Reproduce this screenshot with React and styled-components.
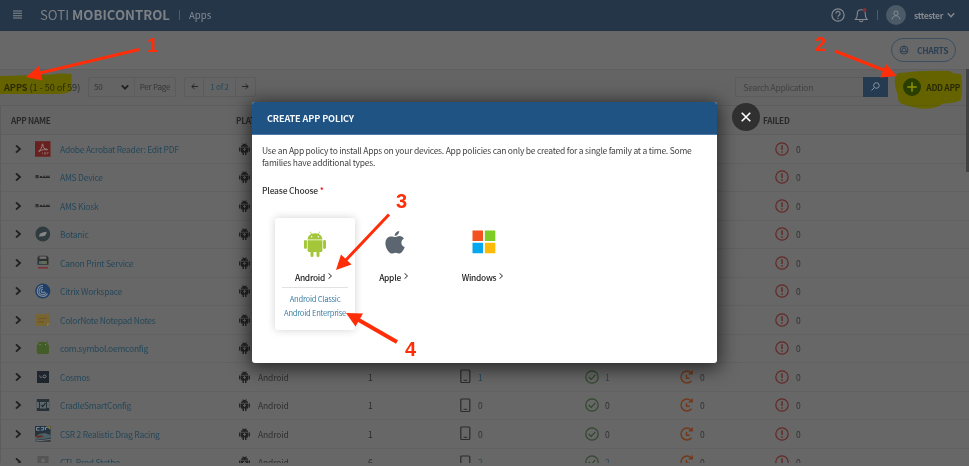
import React from "react";
import styled, { createGlobalStyle, css } from "styled-components";

const Global = createGlobalStyle`
  * { box-sizing: border-box; }
  html, body { margin: 0; height: 100%; overflow: hidden; }
  body { background: #676767; font-family: "Noto Sans CJK SC", "Noto Sans", sans-serif; font-size: 9px; line-height: 12px; color: #2b2b2b; }
  svg { display: block; flex: none; }
`;

const Page = styled.div`
  position: relative;
  width: 969px;
  height: 466px;
  overflow: hidden;
  display: flex;
  flex-direction: column;
  background: #676767;
`;

const TopBar = styled.header`
  height: 31px;
  flex: none;
  display: flex;
  align-items: center;
  padding: 0 14px 2px 13px;
  background: #253649;
  color: #858a90;
`;
const Brand = styled.div`
  margin-left: 18px;
  font-size: 13.2px;
  line-height: 29px;
  color: #7d8185;
  b { font-weight: 700; }
`;
const Divider = styled.i`
  width: 1px;
  height: 10px;
  background: #4d5b6a;
  margin: 0 ${(p) => p.$right}px 0 ${(p) => p.$left}px;
`;
const Crumb = styled.span`font-size: 9.6px;`;
const UserTools = styled.div`
  display: flex;
  align-items: center;
  margin-left: auto;
`;
const Avatar = styled.span`
  width: 20px;
  height: 20px;
  border-radius: 50%;
  background: #4b5a66;
  display: grid;
  place-items: center;
  margin-right: 8px;
`;
const UserName = styled.b`
  font-size: 8.5px;
  font-weight: 700;
  letter-spacing: -0.35px;
  margin-right: 4px;
`;

const SubBar = styled.div`
  height: 39px;
  flex: none;
  display: flex;
  justify-content: flex-end;
  align-items: center;
  padding-right: 13px;
  background: #686868;
  border-bottom: 1px solid #5f5f5f;
`;
const ChartsButton = styled.button`
  width: 65px;
  height: 24px;
  padding: 0 0 0 7px;
  border: 1px solid #3b4e60;
  border-radius: 12px;
  background: transparent;
  display: flex;
  align-items: center;
  gap: 8px;
  font: 700 8.5px/12px "Noto Sans CJK SC", sans-serif;
  letter-spacing: -0.4px;
  color: #2c4053;
`;

const Toolbar = styled.div`
  height: 36px;
  flex: none;
  display: flex;
  align-items: center;
  padding: 0 9px 2px 4px;
  background: #646464;
  border-bottom: 1px solid #5d5d5d;
`;
const Count = styled.div`
  width: 84px;
  font-size: 9.2px;
  letter-spacing: -0.07px;
  white-space: nowrap;
  b { font-weight: 700; }
`;
const ControlGroup = styled.div`
  display: flex;
  height: 20px;
  border: 1px solid #5c5c5c;
  border-radius: 2px;
  margin-right: 8px;
  font-size: 8.1px;
  letter-spacing: -0.25px;
`;
const Cell = styled.div`
  width: ${(p) => p.$w}px;
  display: flex;
  align-items: center;
  justify-content: ${(p) => p.$justify || "center"};
  padding: 0 ${(p) => p.$pad || 0}px;
  color: ${(p) => p.$color || "#353535"};
  white-space: nowrap;
  & + & { border-left: 1px solid #5c5c5c; }
`;
const Search = styled.div`
  display: flex;
  margin-left: auto;
  width: 153px;
  height: 20px;
  border: 1px solid #5c5c5c;
  font-size: 8.5px;
  letter-spacing: -0.25px;
  color: #424242;
  line-height: 18px;
  padding-left: 7px;
`;
const SearchButton = styled.span`
  width: 25px;
  height: 20px;
  margin: -1px -1px 0 auto;
  background: #243b51;
  display: grid;
  place-items: center;
`;
const AddApp = styled.div`
  display: flex;
  align-items: center;
  gap: 5px;
  margin-left: 15px;
  font-size: 8.4px;
  font-weight: 700;
  letter-spacing: -0.3px;
  color: #2a2a10;
  white-space: nowrap;
`;

const tableGrid = css`
  display: grid;
  grid-template-columns: 234px 133px 92px 125px 95px 95px 1fr;
  align-items: center;
`;
const TableHead = styled.div`
  ${tableGrid}
  height: 29px;
  flex: none;
  padding-bottom: 1px;
  background: #656565;
  border-bottom: 1px solid #5e5e5e;
  border-left: 1px solid #5c5c5c;
  font-size: 8.2px;
  font-weight: 700;
  letter-spacing: -0.25px;
  color: #292929;
  span:first-child { padding-left: 10px; }
  span:nth-child(2) { padding-left: 1px; }
  span:last-child { margin-left: -12px; }
`;
const Row = styled.div`
  ${tableGrid}
  height: 28.5px;
  flex: none;
  border-bottom: 1px solid #616161;
  border-left: 1px solid #5c5c5c;
  font-size: 8.5px;
`;
const NameCell = styled.div`
  display: flex;
  align-items: center;
  padding-left: 13px;
  > svg + svg { margin-left: 13px; }
`;
const AppLink = styled.a`
  color: #25485a;
  margin-left: 9px;
  letter-spacing: -0.25px;
  white-space: nowrap;
`;
const IconValue = styled.div`
  display: flex;
  align-items: center;
  gap: ${(p) => p.$gap || 6}px;
  color: ${(p) => (p.$link ? "#25485a" : "#303030")};
  padding-left: ${(p) => p.$pad || 0}px;
`;
const Platform = styled.span`letter-spacing: -0.15px;`;

const Modal = styled.section`
  position: absolute;
  left: 252px;
  top: 102px;
  width: 465px;
  height: 261px;
  border-radius: 3px;
  background: #fff;
  overflow: hidden;
  box-shadow: 0 3px 18px 3px rgba(0, 0, 0, 0.6);
`;
const ModalTitle = styled.h1`
  margin: 0;
  height: 33px;
  padding-left: 15px;
  background: #1e5384;
  border-bottom: 1px solid #4b79a6;
  color: #f4f7fa;
  font-size: 9.1px;
  line-height: 33px;
  font-weight: 700;
  letter-spacing: -0.1px;
`;
const ModalBody = styled.div`padding: 10px 10px 0;`;
const Intro = styled.p`
  margin: 0;
  font-size: 8.5px;
  line-height: 11.7px;
  letter-spacing: -0.235px;
  color: #444;
  white-space: nowrap;
`;
const Prompt = styled.div`
  margin-top: 16px;
  font-size: 8.5px;
  font-weight: 500;
  letter-spacing: -0.2px;
  color: #333;
  em { color: #e12; font-style: normal; }
`;
const Choices = styled.div`
  display: flex;
  margin: 22px 0 0 13px;
`;
const Choice = styled.div`
  width: 80px;
  height: 112px;
  padding-top: ${(p) => (p.$selected ? 13 : 12)}px;
  margin-right: ${(p) => p.$gap || 0}px;
  border-radius: 3px;
  display: flex;
  flex-direction: column;
  align-items: center;
  ${(p) => p.$selected && css`box-shadow: 0 0 8px rgba(0, 0, 0, 0.18);`}
`;
const ChoiceLabel = styled.div`
  display: flex;
  align-items: center;
  gap: 2px;
  margin-top: ${(p) => (p.$raised ? 14 : 15)}px;
  height: 12px;
  font-size: 8.4px;
  font-weight: 500;
  letter-spacing: -0.25px;
  color: #222;
  svg { margin: 0 2px 2px 0; }
`;
const SubLinks = styled.div`
  width: 66px;
  border-top: 1px solid #e2e2e2;
  margin-top: 4px;
  padding-top: 4px;
  display: flex;
  flex-direction: column;
  align-items: center;
  font-size: 7.6px;
  line-height: 14px;
  letter-spacing: -0.25px;
  color: #3c7fa5;
  white-space: nowrap;
`;
const CloseButton = styled.button`
  position: absolute;
  left: 732px;
  top: 103px;
  width: 28px;
  height: 28px;
  padding: 0;
  border: 0;
  border-radius: 50%;
  background: #303030;
  display: grid;
  place-items: center;
`;
const ScrollThumb = styled.i`
  position: absolute;
  right: 0;
  top: 69px;
  width: 3px;
  height: 103px;
  background: #424242;
`;
const BottomEdge = styled.i`
  position: absolute;
  left: 0;
  right: 0;
  bottom: 0;
  height: 3px;
  background: #676767;
`;
const Annotations = styled.svg`
  position: absolute;
  inset: 0;
  pointer-events: none;
  ${(p) => p.$multiply && css`mix-blend-mode: multiply;`}
`;
const Mark = styled.span`
  position: absolute;
  left: ${(p) => p.$x}px;
  top: ${(p) => p.$y}px;
  font: 700 20px/20px "Liberation Sans", Arial, sans-serif;
  color: #ff2d08;
`;

const Chevron = ({ dir = "right", size = 8, color = "#202020", w = 1.5 }) => (
  <svg width={size} height={size} viewBox="0 0 8 8" fill="none" stroke={color} strokeWidth={w}>
    <path d={dir === "right" ? "M2 .4 6 4 2 7.6" : "M.8 2.3 4 5.7 7.2 2.3"} />
  </svg>
);
const Arrow = ({ flip }) => (
  <svg width="7" height="7" viewBox="0 0 7 7" fill="none" stroke="#262626" strokeWidth="1">
    <path d={flip ? "M7 3.5H.8M3.5 1 .8 3.5 3.5 6" : "M0 3.5h6.2M3.5 1l2.7 2.5L3.5 6"} />
  </svg>
);
const Robot = ({ width, height, color, eyes = "#fff" }) => (
  <svg width={width} height={height} viewBox="0 0 22 26" fill={color}>
    <path d="M3.6 8.5C3.7 5.9 5 4 7.2 3L5.9.8l.5-.3 1.4 2.3a9 9 0 0 1 6.4 0L15.6.5l.5.3L14.8 3c2.2 1 3.5 2.900 3.6 5.500z" />
    <path d="M3.600 9.300h14.800v10.200a1.500 1.500 0 0 1-1.500 1.500h-1.400v3.400a1.500 1.500 0 0 1-3 0V21h-3v3.400a1.500 1.500 0 0 1-3 0V21H5.100a1.500 1.500 0 0 1-1.500-1.500z" />
    <rect x="0" y="9" width="2.900" height="9" rx="1.450" />
    <rect x="19.100" y="9" width="2.900" height="9" rx="1.450" />
    <circle cx="7.600" cy="5.700" r=".8" fill={eyes} />
    <circle cx="14.400" cy="5.700" r=".8" fill={eyes} />
  </svg>
);
const PlatformIcon = () => (
  <svg width="11" height="12" viewBox="0 0 11 12" fill="#232323">
    <path d="M2 4.500C2 2.600 3 1.600 4 1.200L3.300.3h.8l.6.7h1.600l.6-.7h.8L7 1.200c1 .4 2 1.400 2 3.300zM2 5h7v4.500H7.500V12H6V9.500H5V12H3.500V9.500H2zM0 4.500h1.500v4H0zM9.500 4.500H11v4H9.500z" />
    <path d="M5 5h1v1h1v1H6v1H5V7H4V6h1zM3.500 2.700h1v.8h-1zM6.500 2.700h1v.8h-1z" fill="#5c5c5c" />
  </svg>
);
const DeviceIcon = () => (
  <svg width="11" height="15" viewBox="0 0 11 15" fill="none" stroke="#2c2c2c">
    <rect x=".8" y="1" width="9" height="12.500" rx="1" strokeWidth="1.200" />
    <path d="M3.600 11.300h3.600" />
  </svg>
);
const CheckIcon = () => (
  <svg width="14" height="14" viewBox="0 0 14 14" fill="none" stroke="#30482b" strokeWidth="1.200">
    <circle cx="7" cy="7" r="6.200" />
    <path d="m3.700 7 2.400 2.300 4.300-4.500" />
  </svg>
);
const PendingIcon = () => (
  <svg width="14" height="14" viewBox="0 0 14 14" fill="none" stroke="#70391c" strokeWidth="1.400">
    <path d="M11.600 10.800A6 6 0 1 1 11.500 3M12.200.5v3.200H8.800M6.500 5v3.200h3.200" />
  </svg>
);
const FailIcon = () => (
  <svg width="14" height="14" viewBox="0 0 14 14" fill="none" stroke="#642824" strokeWidth="1.200">
    <circle cx="7" cy="7" r="6.200" />
    <path d="M7 3.200v4.900M7 9.300v1.500" strokeWidth="1.400" />
  </svg>
);

const drawings = {
  adobe: (
    <g>
      <rect width="15.500" height="15.500" y=".2" fill="#69201e" />
      <path d="M3.500 10.200C5.700 9.100 7.300 5.800 7.100 3.700c0-1 1.200-1 .9.200C7.400 6.300 9.500 8.200 12 8.200c.8 0 .5 1-.3.700-2-.6-4.500-.5-7.900 1.700" fill="none" stroke="#999" strokeWidth=".8" />
      <path d="M7.500 11.300v2M9.500 11.300v2h1.200v-2zM12.300 13.300v-2h1.500M12.300 12.300h1" stroke="#8c7574" strokeWidth=".6" fill="none" />
    </g>
  ),
  zebra: (
    <g>
      <path d="M.5 6h3v3.200h-3z" fill="#292929" />
      <path d="M1.300 7h1M1.300 8.300h1" stroke="#696969" strokeWidth=".5" />
      <path d="M4.500 8.500h10.500M5 7.500h2M8 7.200h2.200M11 7.300h3.700" stroke="#292929" strokeWidth="1.100" />
    </g>
  ),
  botanic: (
    <g>
      <circle cx="7.800" cy="8" r="7.400" fill="#303b3f" />
      <path d="M4.200 10.200c0-3 2.500-3.700 7.500-4.400-.3 3.400-2.400 5.100-4.900 4.500-.9-.2-1.500.2-2.600.4z" fill="#858585" />
    </g>
  ),
  canon: (
    <g>
      <path d="M2.500 2.500 4 .8h8l1.500 1.700v7.300h-11z" fill="#2e3030" />
      <path d="M4.500 1.500h6.800v2.300H4.500z" fill="#727272" />
      <path d="M4 6h7.800v3H4z" fill="#636f55" />
      <path d="M4 6h3v3H4z" fill="#4c6675" />
      <path d="M3 12.800h10" stroke="#7e2626" strokeWidth="1.300" />
    </g>
  ),
  citrix: (
    <g fill="none" stroke="#7b8b9b" strokeWidth="1.100">
      <circle cx="7.800" cy="8" r="7.600" fill="#203f68" stroke="none" />
      <path d="M12.500 10.500a5.400 5.400 0 1 1-4.500-8" />
      <path d="M11 9.500a3.600 3.600 0 1 1-3-5" />
      <path d="M9.500 8.500a1.700 1.700 0 1 1-1.400-2.200" />
    </g>
  ),
  note: (
    <g>
      <path d="M1 2h13.500v9.500l-2.500 2.400H1z" fill="#776631" />
      <path d="M14.500 11.500H12v2.400z" fill="#968142" />
      <path d="M3 7.500c2-2 3-.5 4.500-1s2 .8 4.500-1M3 9.800h6" stroke="#704923" strokeWidth=".8" fill="none" />
    </g>
  ),
  android: (
    <g fill="#435d28">
      <path d="M1.700 6.500A6.200 5.400 0 0 1 14 6.500V12a2 2 0 0 1-2 2H3.700a2 2 0 0 1-2-2z" />
      <path d="m3 1 1.400 2M12.700 1l-1.400 2" stroke="#435d28" strokeWidth=".8" />
      <circle cx="5" cy="4.700" r=".6" fill="#888" />
      <circle cx="10.600" cy="4.700" r=".6" fill="#888" />
    </g>
  ),
  cosmos: (
    <g>
      <rect x="2" y="2" width="12" height="12" fill="#1f252d" />
      <path d="M4.700 6.500c0 2 1.400 2.400 2.800 1.400M8 7.500a1.500 1.500 0 0 1 3 0c0 1.500-2 1.500-3 .8" fill="none" stroke="#777b80" />
    </g>
  ),
  cradle: (
    <g>
      <rect x="1.800" y="2" width="12.400" height="12" fill="#293036" />
      <path d="M2 5h2v6H2zM12 5h2v6h-2zM5 5h6v6.500H5z" fill="#5c6870" />
      <path d="m6.300 8 1.500 1.500L10.500 6" fill="none" stroke="#20262b" strokeWidth="1.200" />
    </g>
  ),
  csr: (
    <g>
      <rect y=".2" width="15.500" height="15.500" fill="#283238" />
      <path d="M0 .2h15.500V5H0z" fill="#1d344b" />
      <path d="M1.500 1.500h3M1.500 1.500v2.700h3M6 1.600h3L8.500 4H5.800M10.500 4V1.500h2" stroke="#82898d" fill="none" />
      <path d="M11 .2h4.500V4z" fill="#847832" />
      <path d="m0 11 4-3 6-1 5.500 2v3l-7 1L0 14z" fill="#4c6067" />
      <path d="m1 10 5-1 3 2-7 1z" fill="#68302a" />
      <path d="M0 15l15.500-1.500" stroke="#717574" />
    </g>
  ),
  generic: (
    <g>
      <rect x="2.500" y="2" width="11" height="13" fill="#555" />
      <circle cx="8" cy="6.500" r="2" fill="#686868" />
      <path d="M4.500 12h7v2h-7z" fill="#686868" />
    </g>
  ),
};
const AppIcon = ({ type }) => (
  <svg width="16" height="16" viewBox="0 0 16 16">{drawings[type]}</svg>
);

const apps = [
  ["Adobe Acrobat Reader: Edit PDF", "adobe", 1, 0, 0],
  ["AMS Device", "zebra", 1, 0, 0],
  ["AMS Kiosk", "zebra", 1, 0, 0],
  ["Botanic", "botanic", 1, 0, 0],
  ["Canon Print Service", "canon", 1, 0, 0],
  ["Citrix Workspace", "citrix", 1, 0, 0],
  ["ColorNote Notepad Notes", "note", 1, 0, 0],
  ["com.symbol.oemconfig", "android", 1, 0, 0],
  ["Cosmos", "cosmos", 1, 1, 1],
  ["CradleSmartConfig", "cradle", 1, 0, 0],
  ["CSR 2 Realistic Drag Racing", "csr", 1, 0, 0],
  ["CTL Prod Stetho", "generic", 6, 2, 2],
];

const AppRow = ({ app: [name, icon, policies, devices, installed] }) => (
  <Row>
    <NameCell>
      <Chevron size={8} w={1.8} />
      <AppIcon type={icon} />
      <AppLink>{name}</AppLink>
    </NameCell>
    <IconValue $gap={8} $pad={4}><PlatformIcon /><Platform>Android</Platform></IconValue>
    <span>{policies}</span>
    <IconValue $gap={7} $link={devices > 0}><DeviceIcon />{devices}</IconValue>
    <IconValue $link={installed > 0}><CheckIcon />{installed}</IconValue>
    <IconValue><PendingIcon />0</IconValue>
    <IconValue $gap={7}><FailIcon />0</IconValue>
  </Row>
);

const Header = () => (
  <TopBar>
    <svg width="9" height="9" viewBox="0 0 9 9" stroke="#858a90" strokeWidth="1.100">
      <path d="M0 1h9M0 3.300h9M0 5.700h9M0 8h9" />
    </svg>
    <Brand>SOTI <b>MOBICONTROL</b></Brand>
    <Divider $left={9} $right={9} />
    <Crumb>Apps</Crumb>
    <UserTools>
      <svg width="14" height="14" viewBox="0 0 14 14" fill="none" stroke="#858a90" strokeWidth="1.200">
        <circle cx="7" cy="7" r="6.100" />
        <path d="M4.900 5.500a2.100 2.100 0 1 1 3.200 1.700c-.8.500-1.100.8-1.100 1.500M7 9.800v1.200" />
      </svg>
      <svg width="32" height="16" viewBox="0 0 32 16" fill="none" stroke="#858a90" strokeWidth="1.100">
        <path d="M10.500 12.500h11.500c-2-2-1.700-3.500-1.700-6 0-5-8-5-8 0 0 2.500.2 4-1.800 6zM14.700 13.200c0 2 3.200 2 3.200 0" />
        <circle cx="19.500" cy="3" r="2" fill="#7e3136" stroke="none" />
      </svg>
      <Divider $left={0} $right={8} />
      <Avatar>
        <svg width="10" height="10" viewBox="0 0 10 10" fill="none" stroke="#7d8c95">
          <circle cx="5" cy="3.200" r="2.200" />
          <path d="M1.200 9.500c0-5 7.600-5 7.600 0" />
        </svg>
      </Avatar>
      <UserName>sttester</UserName>
      <Chevron dir="down" color="#858a90" w={1.4} />
    </UserTools>
  </TopBar>
);

const CreatePolicy = () => (
  <Modal>
    <ModalTitle>CREATE APP POLICY</ModalTitle>
    <ModalBody>
      <Intro>
        Use an App policy to install Apps on your devices. App policies can only be created for a single family at a time. Some<br />
        families have additional types.
      </Intro>
      <Prompt>Please Choose <em>*</em></Prompt>
      <Choices>
        <Choice $selected>
          <Robot width={22} height={26} color="#a4c639" />
          <ChoiceLabel $raised>Android <Chevron size={6} w={1.3} /></ChoiceLabel>
          <SubLinks><span>Android Classic</span><span>Android Enterprise</span></SubLinks>
        </Choice>
        <Choice $gap={9}>
          <svg width="20" height="26" viewBox="0 0 20 26" fill="#5c6670">
            <path d="M14.200 1c.2 2.300-1.900 4.900-4.500 4.900C9.500 3.500 11.700 1.300 14.200 1zM10.200 7.100c1 0 2.300-1.100 4.300-1.100 1.900 0 3.500 1 4.400 2.400-3.700 2.200-3.100 7.300.8 8.700-.8 2.300-2.900 6.400-5.200 6.500-1.500 0-2-.9-3.900-.9s-2.400.9-3.900.9C3.700 23.500.4 17.700.4 13.600.4 9 3.100 6.500 6 6.500c1.800 0 3.200.6 4.200.6z" />
          </svg>
          <ChoiceLabel>Apple <Chevron size={6} w={1.3} /></ChoiceLabel>
        </Choice>
        <Choice>
          <svg width="24" height="26" viewBox="0 0 24 26">
            <path d="M.5.5H11V11H.5z" fill="#f3511f" />
            <path d="M12.800.5h10.500V11H12.800z" fill="#7fcc26" />
            <path d="M.5 12.800H11v10.500H.5z" fill="#05a7ee" />
            <path d="M12.800 12.800h10.500v10.500H12.800z" fill="#fdbb08" />
          </svg>
          <ChoiceLabel>Windows <Chevron size={6} w={1.3} /></ChoiceLabel>
        </Choice>
      </Choices>
    </ModalBody>
  </Modal>
);

export default function App() {
  return (
    <>
      <Global />
      <Page>
        <Header />
        <SubBar>
          <ChartsButton>
            <svg width="10" height="10" viewBox="0 0 10 10" fill="none" stroke="#2c4053">
              <circle cx="5" cy="5" r="4" /><circle cx="5" cy="5" r="2" />
              <path d="M5 1v2M1.500 7l2-1M8.500 7l-2-1" />
            </svg>
            CHARTS
          </ChartsButton>
        </SubBar>
        <Toolbar>
          <Count><b>APPS</b> (1 - 50 of 59)</Count>
          <ControlGroup>
            <Cell $w={45} $pad={5} $justify="space-between">50 <Chevron dir="down" w={1.7} /></Cell>
            <Cell $w={41}>Per Page</Cell>
          </ControlGroup>
          <ControlGroup>
            <Cell $w={18}><Arrow flip /></Cell>
            <Cell $w={32} $color="#25485a">1 of 2</Cell>
            <Cell $w={20}><Arrow /></Cell>
          </ControlGroup>
          <Search>
            Search Application
            <SearchButton>
              <svg width="9" height="9" viewBox="0 0 9 9" fill="none" stroke="#8795a1">
                <circle cx="5.400" cy="3.500" r="2.800" /><path d="M3.300 5.600.5 8.500" />
              </svg>
            </SearchButton>
          </Search>
          <AddApp>
            <svg width="18" height="18" viewBox="0 0 18 18">
              <circle cx="9" cy="9" r="9" fill="#2a3e20" />
              <path d="M9 4.300v9.400M4.300 9h9.400" stroke="#909985" strokeWidth="1.400" />
            </svg>
            ADD APP
          </AddApp>
        </Toolbar>
        <TableHead>
          <span>APP NAME</span><span>PLATFORM</span><span>POLICIES</span><span>ASSIGNED</span>
          <span>INSTALLED</span><span>PENDING</span><span>FAILED</span>
        </TableHead>
        {apps.map((app) => <AppRow key={app[0]} app={app} />)}
        <ScrollThumb />
        <BottomEdge />
        <Annotations $multiply width="969" height="466" viewBox="0 0 969 466" fill="#fffc00">
          <path d="M0 76 52 74.500q8-1.500 19.500-.5v17q-5 3-14 3H0z" />
          <path d="M899 73q25-3 51-2 2 3 11 3 2 12 0 25.500-4 4-18 4-6 4.500-14 5-12 1-25-4-7-2-6-9-4-10-3-17 1-5 4-5.500z" />
        </Annotations>
        <CreatePolicy />
        <CloseButton>
          <svg width="10" height="10" viewBox="0 0 11 11" stroke="#fff" strokeWidth="1.800">
            <path d="m.8.8 9.400 9.400M10.200.8.8 10.200" />
          </svg>
        </CloseButton>
        <Annotations width="969" height="466" viewBox="0 0 969 466" fill="#ff2d08" stroke="none">
          <g stroke="#ff2d08" strokeWidth="3">
            <path d="M139 49.500 40 73" /><path d="M835 51 886 71" />
            <path d="M389 214.500 345 261" /><path d="M397 342 357 319" strokeWidth="4" />
          </g>
          <path d="M26 77 39 66l3.500 14.500z" />
          <path d="m897 76-16.500 1.500L886 64z" />
          <path d="m336 270 5-15.500 10.500 10z" />
          <path d="m346 313 17 .5-7.500 13z" />
        </Annotations>
        <Mark $x={147} $y={35}>1</Mark>
        <Mark $x={815} $y={34}>2</Mark>
        <Mark $x={396} $y={191}>3</Mark>
        <Mark $x={405} $y={339}>4</Mark>
      </Page>
    </>
  );
}
